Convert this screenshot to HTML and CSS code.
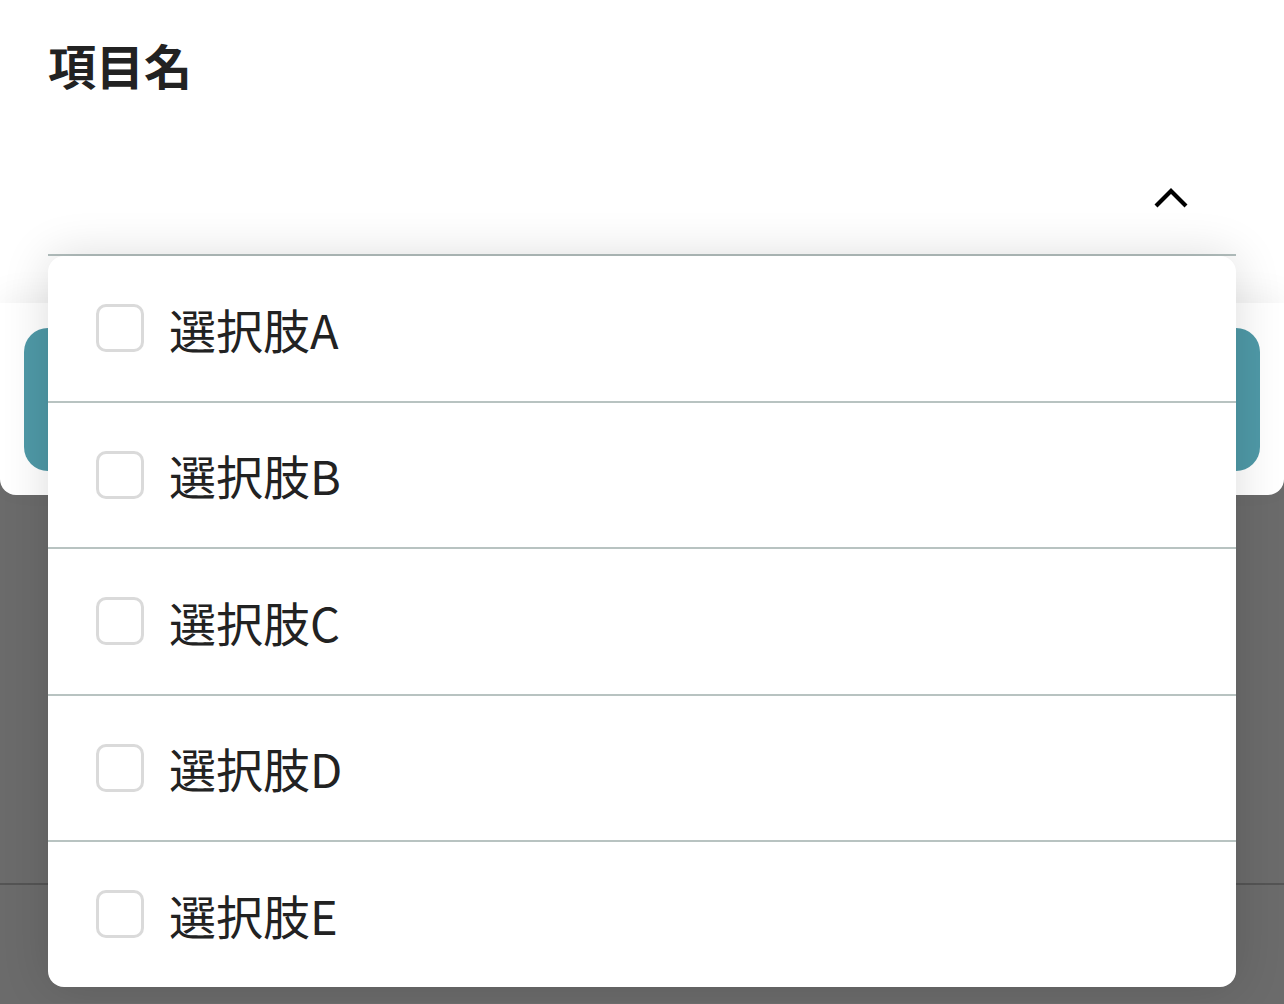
FILE: index.html
```html
<!DOCTYPE html>
<html lang="ja">

<head>
    <meta charset="utf-8">
    <meta name="viewport" content="width=device-width, initial-scale=1">
    <title>項目名</title>
    <link rel="stylesheet" href="styles.css">
</head>

<body>
    <div class="sheet">
        <div class="head">
            <h2 class="title">項目名</h2>
            <div class="select">
                <svg class="chevron" width="36" height="24" viewBox="0 0 36 24">
                    <path d="M3 19 L18 4 L33 19" fill="none" stroke="#000" stroke-width="4.2" />
                </svg>
                <ul class="menu">
                    <li class="option"><span class="check"></span>選択肢A</li>
                    <li class="option"><span class="check"></span>選択肢B</li>
                    <li class="option"><span class="check"></span>選択肢C</li>
                    <li class="option"><span class="check"></span>選択肢D</li>
                    <li class="option"><span class="check"></span>選択肢E</li>
                </ul>
            </div>
        </div>
        <div class="foot">
            <div class="button"></div>
        </div>
    </div>
    <div class="backdrop"></div>
    <div class="backdrop-rest"></div>
</body>

</html>
```

FILE: styles.css
```css
body {
    margin: 0;
    background: #6b6b6b;
    font-family: "Noto Sans CJK JP", "Noto Sans", sans-serif;
    color: #222;
}

.sheet {
    background: #fff;
    border-radius: 0 0 16px 16px;
}

.head {
    height: 303px;
    box-sizing: border-box;
    padding: 31px 48px 0;
}

.title {
    margin: 0;
    font-size: 48px;
    line-height: 66px;
    font-weight: 700;
    color: #222;
}

.select {
    position: relative;
    display: flex;
    justify-content: flex-end;
    align-items: flex-end;
    padding-right: 47px;
    padding-bottom: 43px;
    box-sizing: border-box;
    height: 159px;
    border-bottom: 2px solid #b3bfbe;
}

.chevron {
    display: block;
}

.menu {
    position: absolute;
    top: calc(100% + 2px);
    left: 0;
    right: 0;
    z-index: 2;
    margin: 0;
    padding: 0;
    list-style: none;
    background: #fff;
    border-radius: 16px;
    box-shadow: 0 0 48px rgba(0, 0, 0, 0.14);
}

.option {
    display: flex;
    align-items: center;
    gap: 25px;
    height: 144.5px;
    padding-left: 48px;
    font-size: 47px;
    color: #222;
    border-bottom: 2px solid #b8c3c1;
}

.option:last-child {
    border-bottom: 0;
}

.check {
    width: 48px;
    height: 48px;
    box-sizing: border-box;
    border: 3px solid #dadada;
    border-radius: 10px;
}

.foot {
    position: relative;
    padding: 25px 24px 24px;
    border-radius: 0 0 16px 16px;
    box-shadow: 0 -10px 30px rgba(0, 0, 0, 0.05);
}

.button {
    height: 143px;
    border-radius: 24px;
    background: #4f99a7;
}

.backdrop {
    height: 388px;
    border-bottom: 2px solid #545454;
}

.backdrop-rest {
    height: 118px;
}
```
